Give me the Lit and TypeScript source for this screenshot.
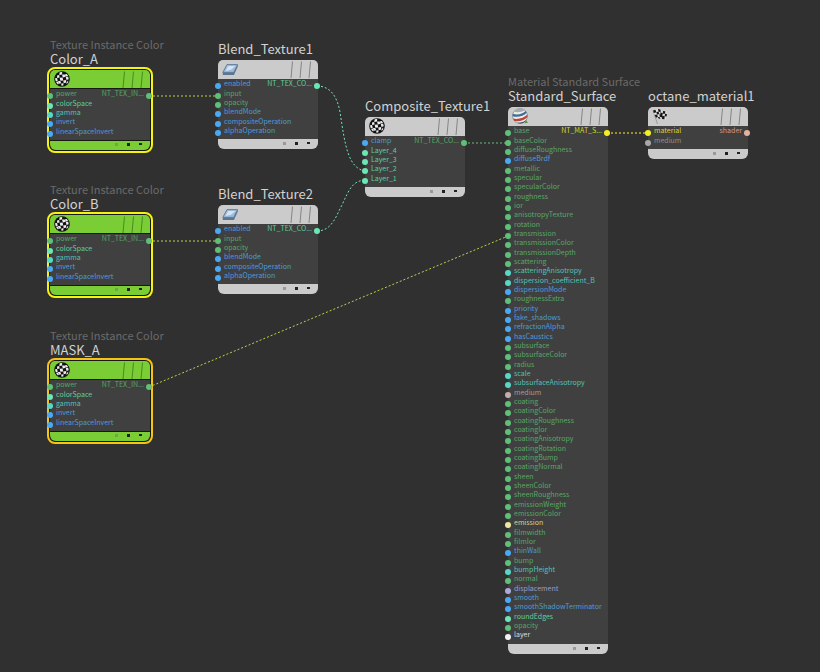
import { LitElement, html, css, svg, nothing } from "lit";
import { customElement, property } from "lit/decorators.js";

type Port = [label: string, kind: string];
type Icon = "ball" | "layer" | "sphere" | "flag";
interface NodeData {
  x: number;
  y: number;
  name: string;
  type?: string;
  icon: Icon;
  tone?: "yellow" | "orange";
  output: Port;
  inputs: Port[];
}

const list = (kind: string, names: string): Port[] =>
  names.split(" ").map((n): Port => [n, kind]);

const colorInputs: Port[] = [
  ["power", "green"],
  ["colorSpace", "mint"],
  ["gamma", "teal"],
  ["invert", "blue"],
  ["linearSpaceInvert", "blue"],
];

const blendInputs: Port[] = [
  ["enabled", "blue"],
  ...list("green", "input opacity"),
  ...list("blue", "blendMode compositeOperation alphaOperation"),
];

const surfaceInputs: Port[] = [
  ...list("green", "base baseColor diffuseRoughness"),
  ["diffuseBrdf", "blue"],
  ...list("green", "metallic specular specularColor roughness ior anisotropyTexture rotation transmission transmissionColor transmissionDepth scattering"),
  ...list("teal", "scatteringAnisotropy dispersion_coefficient_B"),
  ["dispersionMode", "blue"],
  ["roughnessExtra", "green"],
  ...list("blue", "priority fake_shadows refractionAlpha hasCaustics"),
  ...list("green", "subsurface subsurfaceColor radius"),
  ...list("teal", "scale subsurfaceAnisotropy"),
  ["medium", "rose"],
  ...list("green", "coating coatingColor coatingRoughness coatingIor coatingAnisotropy coatingRotation coatingBump coatingNormal sheen sheenColor sheenRoughness emissionWeight emissionColor"),
  ["emission", "cream"],
  ...list("green", "filmwidth filmIor"),
  ["thinWall", "blue"],
  ["bump", "green"],
  ["bumpHeight", "teal"],
  ["normal", "green"],
  ["displacement", "lilac"],
  ...list("blue", "smooth smoothShadowTerminator"),
  ["roundEdges", "mint"],
  ["opacity", "green"],
  ["layer", "white"],
];

const nodes: NodeData[] = [
  { x: 50, y: 37, name: "Color_A", type: "Texture Instance Color", icon: "ball", tone: "yellow", output: ["NT_TEX_IN...", "green"], inputs: colorInputs },
  { x: 50, y: 182, name: "Color_B", type: "Texture Instance Color", icon: "ball", tone: "yellow", output: ["NT_TEX_IN...", "green"], inputs: colorInputs },
  { x: 50, y: 328, name: "MASK_A", type: "Texture Instance Color", icon: "ball", tone: "orange", output: ["NT_TEX_IN...", "green"], inputs: colorInputs },
  { x: 218, y: 41, name: "Blend_Texture1", icon: "layer", output: ["NT_TEX_CO...", "mint"], inputs: blendInputs },
  { x: 218, y: 186, name: "Blend_Texture2", icon: "layer", output: ["NT_TEX_CO...", "mint"], inputs: blendInputs },
  { x: 365, y: 98, name: "Composite_Texture1", icon: "ball", output: ["NT_TEX_CO...", "green"], inputs: [["clamp", "blue"], ...list("mint", "Layer_4 Layer_3 Layer_2 Layer_1")] },
  { x: 508, y: 74, name: "Standard_Surface", type: "Material Standard Surface", icon: "sphere", output: ["NT_MAT_S...", "yellow"], inputs: surfaceInputs },
  { x: 648, y: 88, name: "octane_material1", icon: "flag", output: ["shader", "peach"], inputs: [["material", "yellow"], ["medium", "gray"]] },
];

const wires = [
  { d: "M149 96H218", kind: "lime" },
  { d: "M149 241H218", kind: "lime" },
  { d: "M149 387L508 236", kind: "lime" },
  { d: "M317 86C330 86 337 96 340 112C345 145 348 168 365 171", kind: "mint" },
  { d: "M317 231C332 231 336 216 342 205C349 190 352 181 365 180", kind: "mint" },
  { d: "M464 143H508", kind: "green" },
  { d: "M607 133H648", kind: "yellow" },
];

const icons = {
  ball: svg`
    <circle cx="8" cy="8" r="7.8" fill="#111"/>
    <g fill="#eee">
      <path d="M5.6 1.2 8.2.9 8 3.4 5.3 3.9zM10.6 3.4l2.2-.5 1.3 2.2-2.2.5zM3 4.4l2.2-.4.4 2.5L3.2 7zM8 3.6l2.5-.1 1.2 2.2-2.9.9zM1 7.3l2.1-.2.6 2.8-2 .4zM5.7 6.7l2.9-.1.6 2.8-2.9.4zM11.8 5.9l2.4-.2.5 2.5-2.2.7zM3.9 10.1l2.4-.2.9 2.4-2.2.5zM9.3 9.5l2.9-.5-.1 2.5-2.4.8zM2 11l1.7-.5 1.1 2.3-.9.7zM7.3 12.5l2.2-.2-.2 2.3-1.9.2zM12.4 11.7l1.7-2.2.1 1.8-1.5 1.8z"/>
    </g>`,
  layer: svg`
    <path d="M.8 11.600 5 3.600H15.600V6L12 14H.8z" fill="#5d7590"/>
    <path d="M.8 11.400 5 3.600H15.600L11.800 11.400z" fill="#9dbcdc" stroke="#5a7593" stroke-width=".8"/>
    <path d="M3.600 9.900 6.200 5H13.400L9 8.800z" fill="#d4e4f3"/>`,
  sphere: svg`
    <circle cx="8" cy="8" r="7.500" fill="#ececec" stroke="#8b8f93" stroke-width=".8"/>
    <path d="M2 3.800C3.400 1.600 5.600.6 8 .5 10 .5 11.600 1 12.800 2 10 4 6 4.800 2 3.800z" fill="#a4abb1"/>
    <path d="M.8 5.800C5.500 7.400 10.500 6 13.600 2.900L14.800 4.700C11.500 8 6 9.700.5 8.200z" fill="#3f6e93"/>
    <path d="M1 10.600C6.500 11.800 12 10 15.400 6.600L15.300 9.300C12 12.500 7 13.900 2.400 12.900z" fill="#bf4236"/>
    <path d="M4.800 14.700C8.500 15 12.200 13.800 14.700 11.400 13 14.700 8.800 16.600 4.800 14.700z" fill="#34485b"/>
    <path d="M14 12.500 16 14.500l-3.500 1z" fill="#4f8f3a"/>`,
  flag: svg`
    <path d="M1 2.500 5.500 16" stroke="#9a9a9a"/>
    <path d="M1 2.500 6 .8 11 3 15 3.600 14 11.400 9.600 11.200 4 9.700z" fill="#dedede"/>
    <path d="M1 2.500 3.400 1.700 4.300 4.200 1.900 4.900zM6 .8 8.600 1.700 8.600 4.200 6.500 3.600zM11 3l2.300.3-.3 2.500-2.300-.3zM4.300 4.200l2.200-.6.800 2.500-2.200.4zM8.600 4.200l2.200 1.300-.5 2.300-2.100-1.100zM13 5.800l1.900.2-.3 2.500-1.900-.2zM2.700 7.100l2.400-.6.8 2.600-2 .6zM7.300 6.100l1 .6 2 1.100-.5 1.600-2-.6zM10.300 7.800l2.400.5-.3 2.900-2.500-.1zM5.900 9.100l2 .2.500 1.600-2.200-.6z" fill="#151515"/>`,
};

@customElement("graph-node")
class GraphNode extends LitElement {
  @property({ attribute: false }) data!: NodeData;

  static styles = css`
    :host { display: block; width: 100px; }
    .type, .name { white-space: nowrap; }
    .type { font-size: 11px; line-height: 14px; color: #6a6a6a; }
    .name { font-size: 13px; line-height: 16px; font-weight: 400; color: #d2d2d2; margin: 0 0 3px; }
    .card { display: flex; flex-direction: column; border-radius: 5px; background: #404040; }
    .head { display: flex; justify-content: space-between; height: 19px; padding: 0 4px; border-radius: 5px 5px 0 0; background: #cbcbcb; }
    .icon { width: 16px; height: 16px; margin-top: 1px; }
    .slashes { width: 24px; height: 19px; }
    .slashes path { fill: none; stroke: #858585; }
    .foot { display: flex; justify-content: flex-end; gap: 9px; height: 10px; padding: 3px 8px 0 0; box-sizing: border-box; border-radius: 0 0 6px 6px; background: #cbcbcb; }
    .mark { width: 3px; height: 3px; background: #222; }
    .dim { background: #999; }
    .dash { height: 2px; }
    .ports { display: grid; padding-bottom: 4px; }
    ul { grid-area: 1 / 1; margin: 0; padding: 0; list-style: none; }
    .out { justify-self: end; align-self: start; }
    .port { position: relative; display: block; height: 9px; padding: 0 6px; font-size: 7px; line-height: 9px; white-space: nowrap; color: var(--c); }
    .port:nth-child(3n + 1) { height: 10px; }
    .dot { position: absolute; left: -3px; top: 4px; width: 6px; height: 6px; border-radius: 3px; background: var(--d, var(--c)); }
    .out .dot { left: auto; right: -2px; }

    .yellow .card, .orange .card { outline: 2px solid #f6f312; outline-offset: 1px; box-shadow: 0 0 0 1px #161a10; }
    .orange .card { outline-color: #f5c414; }
    .tinted .head, .tinted .foot { background: #7acd35; }
    .tinted .head { box-shadow: inset 0 -1px #161a10; }
    .tinted .foot { box-shadow: inset 0 1px #161a10; }
    .tinted .slashes path { stroke: #4a8a20; }
    .tinted .dim { background: #6fa64a; }

    .k-green { --c: #56a866; --d: #5fbf78; }
    .k-mint { --c: #5fcf9c; --d: #6be6b4; }
    .k-teal { --c: #51c2b6; --d: #58d6c6; }
    .k-blue { --c: #4d9bd6; --d: #4aa9f5; }
    .k-rose { --c: #a39a98; --d: #c4adab; }
    .k-cream { --c: #d9d08c; --d: #efe6a0; }
    .k-lilac { --c: #9a9dc6; --d: #a9abd8; }
    .k-white { --c: #dcdcdc; --d: #f2f2f2; }
    .k-yellow { --c: #d9d52c; --d: #f4ee24; }
    .k-peach { --c: #d09a88; --d: #e6b09e; }
    .k-gray { --c: #8e8e8e; --d: #a8a8a8; }
  `;

  private port([label, kind]: Port) {
    return html`<li class="port k-${kind}"><span class="dot"></span>${label}</li>`;
  }

  render() {
    const n = this.data;
    return html`
      <article class=${n.tone ? `tinted ${n.tone}` : "plain"}>
        ${n.type ? html`<div class="type">${n.type}</div>` : nothing}
        <h2 class="name">${n.name}</h2>
        <div class="card">
          <div class="head">
            <svg class="icon" viewBox="0 0 16 16">${icons[n.icon]}</svg>
            <svg class="slashes" viewBox="0 0 24 19">
              <path d="M2.500 1.500 1 18M11.500 1.500 10 18M20.500 1.500 19 18"/>
            </svg>
          </div>
          <div class="ports">
            <ul>${n.inputs.map((p) => this.port(p))}</ul>
            <ul class="out">${this.port(n.output)}</ul>
          </div>
          <div class="foot">
            <span class="mark dim"></span><span class="mark"></span><span class="mark dash"></span>
          </div>
        </div>
      </article>`;
  }
}

@customElement("app-root")
class AppRoot extends LitElement {
  static styles = css`
    :host { display: block; position: relative; min-height: 100vh; overflow: hidden; background: #303030; font-family: "Noto Sans CJK SC", "Noto Sans", sans-serif; }
    .wires { position: absolute; left: 0; top: 0; width: 100%; height: 100%; }
    .wire { fill: none; stroke-width: 1; stroke-dasharray: 2 2; }
    .lime { stroke: #b4d650; }
    .mint { stroke: #6fe6b8; }
    .green { stroke: #62c078; }
    .yellow { stroke: #fff52e; }
    .node { position: absolute; }
  `;

  render() {
    return html`
      <svg class="wires" aria-hidden="true">
        ${wires.map((w) => svg`<path class="wire ${w.kind}" d=${w.d}/>`)}
      </svg>
      ${nodes.map((n) => html`<graph-node class="node" style="left:${n.x}px;top:${n.y}px" .data=${n}></graph-node>`)}
    `;
  }
}
